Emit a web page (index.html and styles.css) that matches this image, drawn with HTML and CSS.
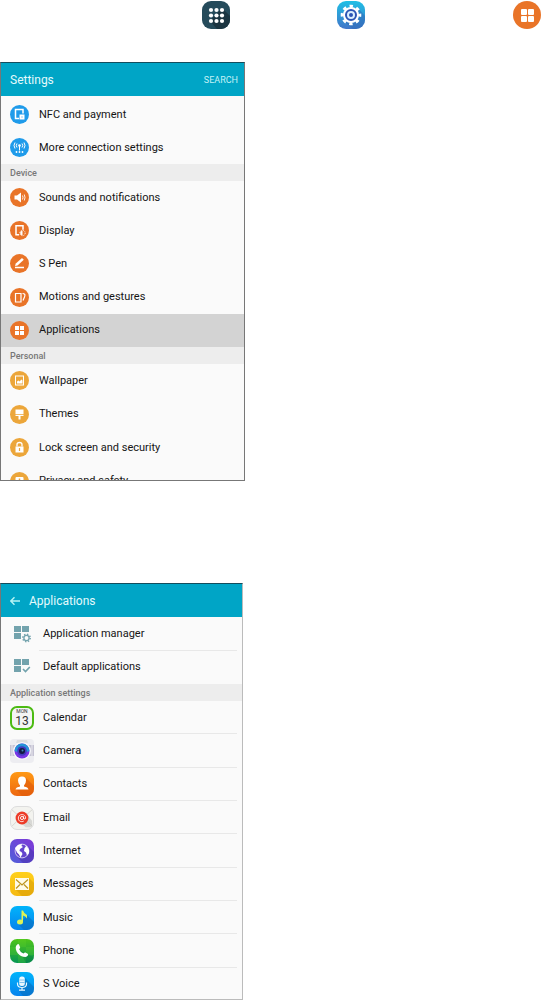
FILE: index.html
```html
<!DOCTYPE html>
<html lang="en">
<head>
  <meta charset="UTF-8" />
  <meta name="viewport" content="width=device-width, initial-scale=1.0" />
  <title>Applications</title>
  <link rel="stylesheet" href="styles.css">
</head>
<body>
  <nav class="steps">
    <a class="step apps" href="#apps" aria-label="Apps">
      <svg viewBox="0 0 28 28"><path d="M20 7l8 8v13H15l-7-8z" fill="#1b3541"/><g fill="#fff"><circle cx="9" cy="9" r="2.1"/><circle cx="14.5" cy="9" r="2.1"/><circle cx="20" cy="9" r="2.1"/><circle cx="9" cy="14.5" r="2.1"/><circle cx="14.5" cy="14.5" r="2.1"/><circle cx="20" cy="14.5" r="2.1"/><circle cx="9" cy="20" r="2.1"/><circle cx="14.5" cy="20" r="2.1"/><circle cx="20" cy="20" r="2.1"/></g></svg>
    </a>
    <a class="step gear" href="#settings" aria-label="Settings">
      <svg viewBox="0 0 28 28"><path d="M21 7l7 8v13H16l-8-7z" fill="#2c69b5" opacity=".5"/><circle cx="14" cy="14" r="8.8" fill="none" stroke="#fff" stroke-width="3" stroke-dasharray="3.4 3.51" stroke-dashoffset="1.7"/><circle cx="14" cy="14" r="8" fill="#fff"/><circle cx="14" cy="14" r="5" fill="#d9efff" stroke="#2b55b4" stroke-width="2"/><circle cx="14" cy="14" r="2" fill="#2b55b4"/></svg>
    </a>
    <a class="step tiles" href="#applications" aria-label="Applications">
      <svg viewBox="0 0 28 28"><g fill="#fff"><rect x="8" y="8" width="6" height="6" rx="1"/><rect x="15" y="8" width="6" height="6" rx="1"/><rect x="8" y="15" width="6" height="6" rx="1"/><rect x="15" y="15" width="6" height="6" rx="1"/></g></svg>
    </a>
  </nav>

  <section class="screen settings" id="settings">
    <header class="bar">
      <h1>Settings</h1>
      <button class="search" type="button">SEARCH</button>
    </header>
    <ul class="list connections">
      <li><a href="#nfc"><span class="dot blue"><svg viewBox="0 0 19 19"><path d="M9 13.5H5.5v-9h7.500v4" fill="none" stroke="#fff" stroke-width="1.500"/><rect x="9.500" y="9.500" width="5" height="5" fill="#fff"/><path d="M11.500 11.500h1v1h-1z" fill="#1f9bea"/></svg></span>NFC and payment</a></li>
      <li><a href="#more"><span class="dot blue"><svg viewBox="0 0 19 19"><g fill="none" stroke="#fff"><path d="M9.500 7.500v5M7 5.500q-1.500 2 0 4M12 5.500q1.500 2 0 4M5 4.500q-2 3 0 6M14 4.500q2 3 0 6"/></g><g fill="#fff"><circle cx="9.500" cy="7.500" r="1.300"/><circle cx="6.500" cy="14" r=".9"/><circle cx="9.500" cy="14" r=".9"/><circle cx="12.500" cy="14" r=".9"/></g></svg></span>More connection settings</a></li>
    </ul>
    <h2>Device</h2>
    <ul class="list device">
      <li><a href="#sounds"><span class="dot orange"><svg viewBox="0 0 19 19"><path d="M4.500 7.500H7l4-3v10l-4-3H4.500z" fill="#fff"/><path d="M12.500 7.500q1 2 0 4M14.300 6.500q1.400 3 0 6" fill="none" stroke="#fff" stroke-width=".9"/></svg></span>Sounds and notifications</a></li>
      <li><a href="#display"><span class="dot orange"><svg viewBox="0 0 19 19"><path d="M9 13.700H6v-9h7v4" fill="none" stroke="#fff" stroke-width="1.500"/><circle cx="12.500" cy="12" r="2.700" fill="none" stroke="#fff" stroke-dasharray="1 1.120"/><path d="M12.500 9.700a2.300 2.300 0 0 0 0 4.600z" fill="#fff"/></svg></span>Display</a></li>
      <li><a href="#spen"><span class="dot orange"><svg viewBox="0 0 19 19"><path d="M5 11.900l.8-2.400L12 4l1.800 1.700L7.500 11.500z" fill="#fff"/><path d="M5 13.500h9" stroke="#fff" stroke-width="1.500"/></svg></span>S Pen</a></li>
      <li><a href="#motions"><span class="dot orange"><svg viewBox="0 0 19 19"><path d="M5.500 5.500h5.500v8.500H5.500zM12.500 5.500q3.500 0 2 3.500l-1.500 3.500" fill="none" stroke="#fff" stroke-width="1.200"/></svg></span>Motions and gestures</a></li>
      <li class="selected"><a href="#applications"><span class="dot orange"><svg viewBox="0 0 19 19"><path d="M5 5h4v4H5zM10 5h4v4h-4zM5 10h4v4H5zM10 10h4v4h-4z" fill="#fff"/></svg></span>Applications</a></li>
    </ul>
    <h2>Personal</h2>
    <ul class="list personal">
      <li><a href="#wallpaper"><span class="dot yellow"><svg viewBox="0 0 19 19"><rect x="5.500" y="5" width="8" height="9" fill="none" stroke="#fff"/><path d="M7 12.500v-2l1.500-1 1 1 2-2 1 1v3z" fill="#fff"/></svg></span>Wallpaper</a></li>
      <li><a href="#themes"><span class="dot yellow"><svg viewBox="0 0 19 19"><path d="M5.500 4.500h8V9h-8zM5.500 9.700h8V11h-3v3.500h-2V11h-3z" fill="#fff"/></svg></span>Themes</a></li>
      <li><a href="#lock"><span class="dot yellow"><svg viewBox="0 0 19 19"><path d="M7 8.500V6.500q0-2 2.500-2T12 6.500v2" fill="none" stroke="#fff" stroke-width="1.300"/><path d="M5.500 8.500h8v6h-8z" fill="#fff"/><path d="M9.500 10v3" stroke="#eca63a" stroke-width="1.200"/></svg></span>Lock screen and security</a></li>
      <li><a href="#privacy"><span class="dot yellow"><svg viewBox="0 0 19 19"><rect x="5.500" y="5" width="8" height="9" rx="1" fill="#fff"/><path d="M9.500 6.500v4" stroke="#eca63a" stroke-width="1.500"/></svg></span>Privacy and safety</a></li>
    </ul>
  </section>

  <section class="screen applications" id="applications">
    <header class="bar">
      <a class="back" href="#settings" aria-label="Back"><svg viewBox="0 0 10 10"><path d="M10 5H1M4.500 1.200L.8 5l3.700 3.800" fill="none" stroke="#b5f4f5" stroke-width="1.400"/></svg></a>
      <h1>Applications</h1>
    </header>
    <ul class="list ruled manage">
      <li><a href="#manager"><span class="tile"><svg viewBox="0 0 24 24"><path d="M4 4h7v6H4zM12 4h7v6h-7zM4 11h7v6H4z" fill="#73a3ad"/><circle cx="16.500" cy="16" r="5" fill="#fafafa"/><g fill="none" stroke="#73a3ad"><circle cx="16.500" cy="16" r="2.600" stroke-width="1.300"/><circle cx="16.500" cy="16" r="3.700" stroke-width="1.500" stroke-dasharray="1.400 1.506"/></g></svg></span>Application manager</a></li>
      <li><a href="#default"><span class="tile"><svg viewBox="0 0 24 24"><path d="M4 4h7v6H4zM12 4h7v6h-7zM4 11h7v6H4z" fill="#73a3ad"/><path d="M13 14l2.500 2.500 4.300-4.500" fill="none" stroke="#73a3ad" stroke-width="1.700"/></svg></span>Default applications</a></li>
    </ul>
    <h2>Application settings</h2>
    <ul class="list ruled apps-list">
      <li><a href="#calendar"><span class="tile calendar"><small>MON</small><b>13</b></span>Calendar</a></li>
      <li><a href="#camera"><span class="tile camera"><svg viewBox="0 0 24 24"><path d="M7 1h10l1 3H6z" fill="#ddd"/><path d="M0 6h24v11H0z" fill="#c5c3d3"/><path d="M2 6v11M22 6v11" stroke="#e9e8ef"/><circle cx="12" cy="12" r="9" fill="#f7f7fa"/><circle cx="12" cy="12" r="7.500" fill="#7936e6"/><path d="M4.500 12a7.500 7.500 0 0 1 15 0q-7.500 3-15 0z" fill="#2595d6"/><circle cx="12" cy="12" r="4.800" fill="#4338bd"/><circle cx="12" cy="12" r="3" fill="#121a44"/><circle cx="12.500" cy="11.500" r="1" fill="#438bb5"/></svg></span>Camera</a></li>
      <li><a href="#contacts"><span class="tile contacts"><svg viewBox="0 0 24 24"><path d="M16 6l8 8v10H12l-6-7z" fill="#dd570a" opacity=".55"/><path d="M8 8.500Q8 4.500 12 4.500t4 4q0 3-2 5v1q4 .5 4.500 3h-13q.5-2.500 4.500-3v-1q-2-2-2-5z" fill="#fff"/></svg></span>Contacts</a></li>
      <li><a href="#email"><span class="tile email"><svg viewBox="0 0 24 24"><path d="M1 3l11 10L23 3M1 21l7-7M23 21l-7-7" fill="none" stroke="#d4d4ce"/><path d="M17 8l6 7v7h-7l-7-6z" fill="#b9b9b5" opacity=".45"/><circle cx="12" cy="12" r="7" fill="#ed3b27"/><circle cx="12" cy="12" r="1.700" fill="none" stroke="#fff"/><path d="M13.700 10v2.500q2 1.800 2.300-.5c0-5-8-5-8 0 0 4 3.500 4.800 6 3.300" fill="none" stroke="#fff" stroke-width=".9"/></svg></span>Email</a></li>
      <li><a href="#internet"><span class="tile internet"><svg viewBox="0 0 24 24"><path d="M18 7l6 6v11H13l-6-6z" fill="#4430a7" opacity=".5"/><circle cx="12" cy="12" r="7.200" fill="#6444ce"/><circle cx="12" cy="12" r="6.900" fill="none" stroke="#fff" stroke-width=".7"/><path d="M5 9l3-3 4-1-.5 2L13 8l-3 2-.5 2 2 1 1 2-2 3.500-1.500-3-2-2zM14 5.500l3 2 2 3.500v3l-2 2.500-1-3-2-1.500.5-3 1.500-1.500z" fill="#fff"/></svg></span>Internet</a></li>
      <li><a href="#messages"><span class="tile messages"><svg viewBox="0 0 24 24"><path d="M19 6l5 5v13H12l-6.500-6.500z" fill="#d69a03" opacity=".5"/><path d="M5 6h14v12H5z" fill="#fffbe8"/><path d="M6 7.500l6 5.500 6-5.500M6 16.500l4-4M18 16.500l-4-4" fill="none" stroke="#bd9421" stroke-width="1.200"/></svg></span>Messages</a></li>
      <li><a href="#music"><span class="tile music"><svg viewBox="0 0 24 24"><path d="M17 9l7 7v8H14l-5-5z" fill="#0867b2" opacity=".5"/><ellipse cx="10" cy="16" rx="3" ry="2.500" fill="#def357"/><path d="M11.500 4.500h1.500q.5 2.500 4 4.500v3.500q-1.500-2.500-4-3V16h-1.500z" fill="#def357"/></svg></span>Music</a></li>
      <li><a href="#phone"><span class="tile phone"><svg viewBox="0 0 24 24"><path d="M8 0h8v8H8zM0 8h8v8H0zM16 8h8v8h-8zM8 16h8v8H8z" fill="#65d52b" opacity=".25"/><path d="M9 11l9 5 6 2v6h-8z" fill="#05763b" opacity=".35"/><path d="M6 7q2-3 3-1.500l1.200 3q-.2 1-1.200 1.500 1 3 4.500 4.500 1-1.200 2-1l2.500 1.500q.5 2-2.500 3C9 18 4.500 11.500 6 7z" fill="#fff"/></svg></span>Phone</a></li>
      <li><a href="#svoice"><span class="tile music"><svg viewBox="0 0 24 24"><path d="M15 6l9 9v9H13l-4-5z" fill="#0867b2" opacity=".5"/><rect x="9.200" y="4.500" width="5.600" height="9.500" rx="2.500" fill="#e9f8ff"/><path d="M9.500 8h5M9.500 10.500h5" stroke="#5aaee5" stroke-width=".7"/><path d="M7.500 10.500v1.500q0 3.500 4.500 3.500t4.500-3.500v-1.500M12 15.500v2M9 18.200h6" fill="none" stroke="#e9f8ff" stroke-width="1.200"/></svg></span>S Voice</a></li>
    </ul>
  </section>
</body>
</html>
```
FILE: styles.css
```css
* {
  box-sizing: border-box;
}
body {
  margin: 0;
  background: #fff;
  color: #151515;
  font-family: Roboto, sans-serif;
}
a {
  color: inherit;
  text-decoration: none;
}
svg {
  display: block;
  width: 100%;
  height: 100%;
}
.steps {
  display: flex;
  justify-content: flex-end;
  padding-top: 1px;
}
.step {
  width: 28px;
  height: 28px;
  border-radius: 9px;
  overflow: hidden;
}
.apps {
  background: #254b5b;
}
.gear {
  margin-left: 107px;
  background: linear-gradient(#1fbfe5, #4176c9);
}
.tiles {
  margin-left: 148px;
  border-radius: 50%;
  background: #e97428;
}
.screen {
  border: 1px solid #777;
  border-top-color: #124d5d;
  background: #fafafa;
  overflow: hidden;
}
.settings {
  max-width: 245px;
  height: 419px;
  margin-top: 33px;
}
.applications {
  max-width: 243px;
  margin-top: 102px;
  border-right-color: #bbb;
  border-bottom-color: #bbb;
}
.bar {
  display: flex;
  align-items: center;
  height: 33px;
  padding: 0 6px 0 9px;
  background: #00a5c6;
  color: #e4fafc;
}
h1 {
  margin: 0;
  font-size: 12px;
  font-weight: 400;
}
.search {
  margin-left: auto;
  padding: 0;
  border: 0;
  background: none;
  color: #c4f2f7;
  font: 9px Roboto, sans-serif;
}
.back {
  width: 10px;
  height: 10px;
  margin-right: 9px;
}
h2 {
  margin: 0;
  padding: 1px 0 0 9px;
  background: #ededed;
  color: #777;
  font-size: 9px;
  font-weight: 500;
  line-height: 16px;
}
.list {
  display: grid;
  grid-auto-rows: 1fr;
  margin: 0;
  padding: 0;
  list-style: none;
}
.list a {
  display: flex;
  align-items: center;
  gap: 10px;
  height: 100%;
  padding-left: 9px;
  font-size: 11px;
  line-height: 14px;
}
.connections {
  min-height: 68px;
  padding-top: 2px;
}
.device {
  min-height: 166px;
}
.personal {
  min-height: 134px;
}
.manage {
  min-height: 67px;
}
/* last row runs slightly under the bottom edge */
.apps-list {
  min-height: 300px;
  margin-bottom: -2px;
}
.selected {
  background: #d3d3d3;
}
.dot {
  flex: none;
  width: 19px;
  height: 19px;
  border-radius: 50%;
}
.blue {
  background: #1f9bea;
}
.orange {
  background: #e97428;
}
.yellow {
  background: #eca63a;
}
.ruled li {
  background: linear-gradient(#e8e8e8, #e8e8e8) bottom right 5px / calc(100% - 43px) 1px no-repeat;
}
.ruled li:last-child {
  background: none;
}
.ruled a {
  gap: 9px;
}
.tile {
  flex: none;
  width: 24px;
  height: 24px;
  border-radius: 7px;
  overflow: hidden;
}
.calendar {
  display: flex;
  flex-direction: column;
  align-items: center;
  border: 2px solid #4cbb13;
  background: #f4f4f4;
  color: #333;
}
.calendar small {
  font-size: 5px;
  line-height: 7px;
}
.calendar b {
  font-size: 12px;
  font-weight: 400;
  line-height: 12px;
}
.camera {
  border-radius: 4px;
  background: #ededf1;
}
.contacts {
  background: linear-gradient(#ff9914, #ed6710);
}
.email {
  border: 1px solid #ddd;
  background: #f3f3ef;
}
.internet {
  background: linear-gradient(45deg, #505fd9, #8037d7);
}
.messages {
  background: linear-gradient(#ffd01b, #f5b911);
}
.music {
  background: linear-gradient(#00b4fb, #0783ed);
}
.phone {
  background: linear-gradient(#4fc51a, #069553);
}
```
